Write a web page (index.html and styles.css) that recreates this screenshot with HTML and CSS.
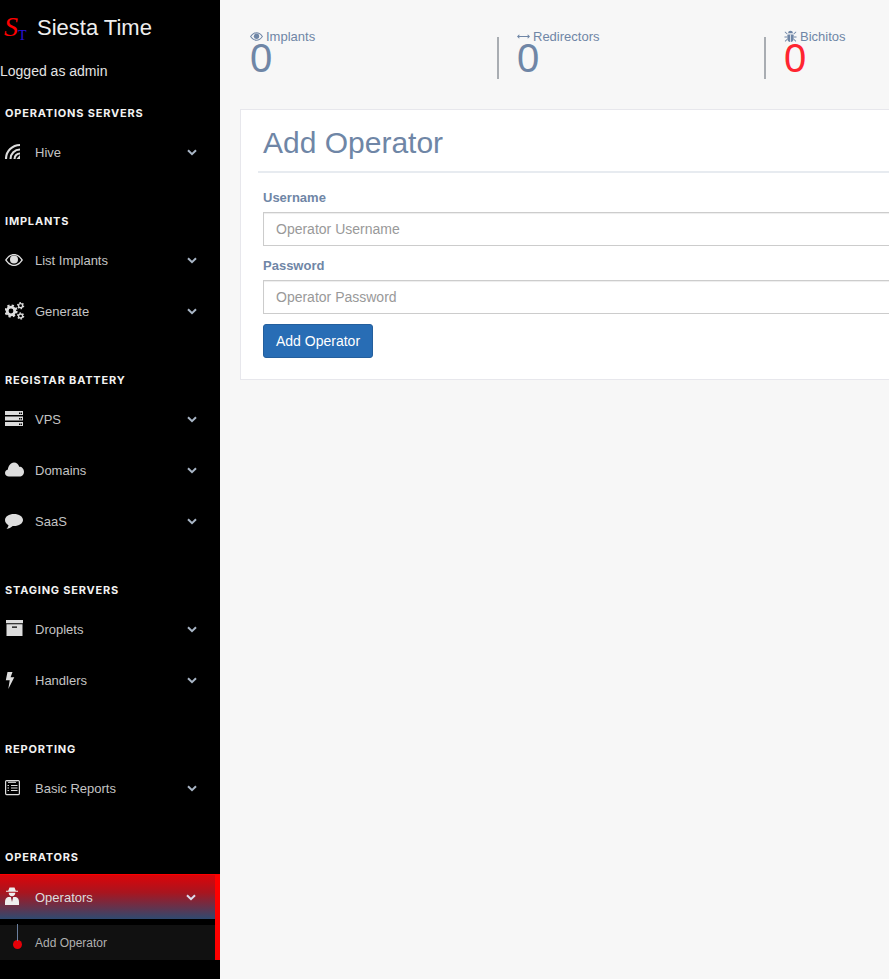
FILE: index.html
```html
<!DOCTYPE html>
<html lang="en">
  <head>
    <meta charset="UTF-8" />
    <meta name="viewport" content="width=device-width, initial-scale=1.0" />
    <title>Siesta Time</title>
    <link rel="stylesheet" href="styles.css">
  </head>
  <body>
    <!-- Sidebar -->
    <aside class="sidebar">
      <div class="brand">
        <span class="logo"><span class="logo-s">S</span><span class="logo-t">T</span></span>
        <span class="brand-name">Siesta Time</span>
      </div>
      <div class="logged">Logged as admin</div>

      <div class="section">Operations Servers</div>
      <a class="nav-row">
        <svg class="icon" viewBox="0 0 20 21"><g fill="none" stroke="#ddd" stroke-width="2.1"><path d="M5.5 18A9.5 9.5 0 0 1 15 8.500"/><path d="M2.500 18A12.500 12.500 0 0 1 15 5.500" opacity="0"/><path d="M9.500 18A5.500 5.500 0 0 1 15 12.500"/><path d="M1 18A14 14 0 0 1 15 4"/></g><path d="M11.500 18 15 14v4z" fill="#ddd"/></svg>
        <span class="nav-text">Hive</span>
        <svg class="chevron" viewBox="0 0 10 7"><path d="M1 1.200l4 4 4-4"/></svg>
      </a>

      <div class="section">Implants</div>
      <a class="nav-row">
        <svg class="icon" viewBox="0 0 20 21"><path fill="#ddd" fill-rule="evenodd" d="M0 11C3 6.500 6 5 9 5s6 1.500 9 6c-3 4.500-6 6-9 6s-6-1.500-9-6zm1.700 0C4 14.300 6.500 15.700 9 15.700s5-1.400 7.300-4.700C14 7.700 11.500 6.300 9 6.300S4 7.700 1.700 11z"/><circle cx="9" cy="10.500" r="4" fill="#ddd"/></svg>
        <span class="nav-text">List Implants</span>
        <svg class="chevron" viewBox="0 0 10 7"><path d="M1 1.200l4 4 4-4"/></svg>
      </a>
      <a class="nav-row">
        <svg class="icon" viewBox="0 0 20 21"><g fill="none" stroke="#ddd"><circle cx="6" cy="11" r="3.800" stroke-width="2.800"/><circle cx="6" cy="11" r="5.400" stroke-width="2.400" stroke-dasharray="2.200 2.040"/><circle cx="15.600" cy="5.700" r="2" stroke-width="1.300"/><circle cx="15.600" cy="5.700" r="3" stroke-width="1.300" stroke-dasharray="1.500 1.640"/><circle cx="15.600" cy="16" r="2" stroke-width="1.300"/><circle cx="15.600" cy="16" r="3" stroke-width="1.300" stroke-dasharray="1.500 1.640"/></g></svg>
        <span class="nav-text">Generate</span>
        <svg class="chevron" viewBox="0 0 10 7"><path d="M1 1.200l4 4 4-4"/></svg>
      </a>

      <div class="section">Registar Battery</div>
      <a class="nav-row">
        <svg class="icon" viewBox="0 0 20 21"><path fill="#ddd" d="M0 3h18v4H0zM0 8.500h18v4H0zM0 14h18v4H0z"/><path fill="#000" d="M14 4.500h1.500V6H14zM16 4.500h1V6h-1zM14 10h1.500v1.500H14zM16 10h1v1.500h-1zM14 15.500h1.500V17H14zM16 15.500h1V17h-1z"/></svg>
        <span class="nav-text">VPS</span>
        <svg class="chevron" viewBox="0 0 10 7"><path d="M1 1.200l4 4 4-4"/></svg>
      </a>
      <a class="nav-row">
        <svg class="icon" viewBox="0 0 20 21"><path fill="#ddd" d="M4 17.500C1.700 17.500 0 16 0 13.900c0-1.900 1.300-3.200 2.900-3.500C3.100 7.600 5.300 3.500 9 3.500c2.700 0 4.500 1.700 5.200 4.200 2.500-.2 4.800 1.900 4.800 5 0 2.700-1.900 4.800-4.500 4.800z"/></svg>
        <span class="nav-text">Domains</span>
        <svg class="chevron" viewBox="0 0 10 7"><path d="M1 1.200l4 4 4-4"/></svg>
      </a>
      <a class="nav-row">
        <svg class="icon" viewBox="0 0 20 21"><path fill="#ddd" d="M9 4c5 0 9 2.600 9 6s-4 6-9 6h-1.300C6 17.700 4 18.500 1.500 19c1-1 1.800-2.200 2-3.700C1.500 14.200 0 12.300 0 10c0-3.400 4-6 9-6z"/></svg>
        <span class="nav-text">SaaS</span>
        <svg class="chevron" viewBox="0 0 10 7"><path d="M1 1.200l4 4 4-4"/></svg>
      </a>

      <div class="section">Staging Servers</div>
      <a class="nav-row">
        <svg class="icon" viewBox="0 0 20 21"><path fill="#ddd" fill-rule="evenodd" d="M1 2h17v3.300H1zM1.500 6.300h16V18h-16zM7 8.500v1.200h5V8.500z"/></svg>
        <span class="nav-text">Droplets</span>
        <svg class="chevron" viewBox="0 0 10 7"><path d="M1 1.200l4 4 4-4"/></svg>
      </a>
      <a class="nav-row">
        <svg class="icon" viewBox="0 0 20 21"><path fill="#ddd" d="M2.500 3h5L5.600 8.300H9.300L3.300 20l1.400-8.700H.8z"/></svg>
        <span class="nav-text">Handlers</span>
        <svg class="chevron" viewBox="0 0 10 7"><path d="M1 1.200l4 4 4-4"/></svg>
      </a>

      <div class="section">Reporting</div>
      <a class="nav-row">
        <svg class="icon" viewBox="0 0 20 21"><rect x=".6" y="3.600" width="13.800" height="14" rx="1" fill="none" stroke="#ddd" stroke-width="1.200"/><path fill="none" stroke="#ddd" d="M3 4.500l1 1.500 1-1.500 1 1.500 1-1.500 1 1.500 1-1.500 1 1.500 1-1.500M2.500 8.500h1.500M6 8.500h6.500M2.500 11h1.500M6 11h6.500M2.500 13.500h1.500M6 13.500h6.500"/></svg>
        <span class="nav-text">Basic Reports</span>
        <svg class="chevron" viewBox="0 0 10 7"><path d="M1 1.200l4 4 4-4"/></svg>
      </a>

      <div class="section">Operators</div>
      <div class="nav-group">
        <a class="nav-row nav-row-active">
          <svg class="icon" viewBox="0 0 20 21"><path fill="#eee" d="M4.500 1.500h5l1.300 3.300H13v1H1v-1h2.200zM3.700 6.800h6.600c0 2-1.300 3.500-3.300 3.500S3.700 8.800 3.700 6.800z"/><path fill="#eee" d="M3 11h2.800L7 16l1.200-5H11c2 .5 3 2.500 3 5v3H0v-3c0-2.500 1-4.500 3-5z"/></svg>
          <span class="nav-text">Operators</span>
          <svg class="chevron" viewBox="0 0 10 7"><path d="M1 1.200l4 4 4-4"/></svg>
        </a>
        <a class="sub-row">
          <span class="sub-dot"></span>
          <span class="sub-text">Add Operator</span>
        </a>
      </div>
    </aside>

    <!-- Main content -->
    <main class="content">
      <div class="stats">
        <div class="stat">
          <div class="stat-label">
            <svg class="stat-icon" viewBox="0 0 14 14"><path fill-rule="evenodd" d="M0 7c2-3 4.500-4.500 7-4.500S12 4 14 7c-2 3-4.500 4.500-7 4.500S2 10 0 7zm1.300 0C3 9.300 5 10.500 7 10.500S11 9.300 12.700 7C11 4.700 9 3.500 7 3.500S3 4.700 1.300 7z"/><circle cx="7" cy="6.800" r="2.900"/></svg>
            Implants
          </div>
          <div class="stat-value">0</div>
        </div>
        <div class="stat stat-split">
          <div class="stat-label">
            <svg class="stat-icon" viewBox="0 0 14 14"><path d="M0 7l2.500-2.500V6.400h9V4.500L14 7l-2.500 2.500V7.600h-9v1.900z"/></svg>
            Redirectors
          </div>
          <div class="stat-value">0</div>
        </div>
        <div class="stat stat-split">
          <div class="stat-label">
            <svg class="stat-icon" viewBox="0 0 14 14"><path d="M4.500 3.200C4.500 1.700 5.600.8 7 .8s2.500.9 2.500 2.400zM3.800 4h6.400v.5H3.800zM3.600 5.200h3v7.800c-1.800-.2-3-1.600-3-3.500zM7.400 5.200h3v4.300c0 1.900-1.200 3.300-3 3.500zM.8 1.800h.9l2 2.200-.6.600-2.300-2.300zM12.300 1.800h.9v.5L10.900 4.600l-.6-.6zM.5 7.100h2.700v.9H.5zM10.800 7.100h2.700v.9h-2.700zM3.100 9.700l.5.700-2.200 2.200-.6-.7zM10.900 9.700l2.300 2.200-.6.700-2.200-2.200z"/></svg>
            Bichitos
          </div>
          <div class="stat-value stat-value-alert">0</div>
        </div>
      </div>

      <div class="card">
        <h1 class="card-title">Add Operator</h1>
        <form>
          <label for="username">Username</label>
          <input type="text" id="username" name="username" placeholder="Operator Username" />
          <label for="password">Password</label>
          <input type="password" id="password" name="password" placeholder="Operator Password" />
          <button type="submit">Add Operator</button>
        </form>
      </div>
    </main>
  </body>
</html>
```

FILE: styles.css
```css
html,
body {
  height: 100%;
  overflow: hidden;
}
body {
  margin: 0;
  display: flex;
  font-family: "Liberation Sans", Arial, sans-serif;
  background: #f7f7f7;
}

/* Sidebar */
.sidebar {
  flex: none;
  width: 220px;
  height: 979px;
  background: #000;
  color: #ddd;
}
.brand {
  display: flex;
  align-items: center;
  height: 55px;
}
.logo {
  width: 37px;
  font-family: "Liberation Serif", serif;
  line-height: 1;
}
.logo-s {
  margin-left: 4px;
  font-size: 28px;
  font-style: italic;
  color: #f00;
}
.logo-t {
  font-size: 14px;
  color: #2a12d8;
  vertical-align: -4px;
}
.brand-name {
  font-size: 22px;
  color: #eee;
}
.logged {
  margin-top: 7px;
  height: 18px;
  font-size: 14px;
  line-height: 18px;
  color: #e4e4e4;
}
.section {
  height: 27px;
  margin-top: 30px;
  padding-left: 5px;
  font-family: Inter, "Liberation Sans", sans-serif;
  font-size: 11px;
  font-weight: 700;
  line-height: 27px;
  letter-spacing: 0.8px;
  text-transform: uppercase;
  color: #f2f2f2;
}
.logged + .section {
  margin-top: 20px;
}
.nav-row {
  display: flex;
  align-items: center;
  height: 51px;
  padding-left: 5px;
  font-size: 13px;
}
.icon {
  flex: none;
  width: 20px;
  height: 21px;
  margin-right: 10px;
  margin-bottom: 2px;
}
.nav-text {
  flex: 1;
  color: #c4c4c4;
}
.chevron {
  flex: none;
  width: 10px;
  height: 7px;
  margin-right: 23px;
  fill: none;
  stroke: #a9b6c6;
  stroke-width: 2;
}

/* Open group */
.nav-group {
  margin-top: 3px;
  border-right: 5px solid #f00;
}
.nav-row-active {
  height: 44px;
  border-top: 1px solid #f00;
  background: linear-gradient(#dc0409, #a8151f 40%, #2f4a70);
}
.nav-row-active .nav-text {
  color: #ddd;
}
.nav-row-active .chevron {
  margin-right: 19px;
  stroke: #dde;
}
.sub-row {
  display: flex;
  align-items: center;
  height: 35px;
  margin-top: 6px;
  background: #111;
}
.sub-dot {
  flex: none;
  position: relative;
  width: 9px;
  height: 9px;
  margin: 0 13px 0 13px;
  top: 2px;
  border-radius: 50%;
  background: #e60008;
}
.sub-dot::before {
  content: "";
  position: absolute;
  left: 4px;
  bottom: 8px;
  width: 1px;
  height: 17px;
  background: #6b7f9e;
}
.sub-text {
  font-size: 12px;
  color: #b0b0b0;
}

/* Main content */
.content {
  flex: none;
  width: 900px;
  padding: 37px 0 0 10px;
}
.stats {
  display: grid;
  grid-template-columns: repeat(3, 267px);
  margin-bottom: 30px;
}
.stat {
  height: 42px;
  padding-left: 20px;
}
.stat-split {
  padding-left: 18px;
  border-left: 2px solid #a9adb2;
}
.stat-label {
  display: flex;
  align-items: center;
  height: 14px;
  margin-top: -8px;
  font-size: 13px;
  color: #6f86a6;
}
.stat-icon {
  flex: none;
  width: 13px;
  height: 13px;
  margin-right: 3px;
  fill: #6f86a6;
}
.stat-value {
  font-size: 40px;
  line-height: 30px;
  color: #6f86a6;
}
.stat-value-alert {
  color: #ff2530;
}

/* Card */
.card {
  width: 800px;
  margin-left: 10px;
  padding: 16px 22px 21px;
  background: #fff;
  border: 1px solid #e7e7ec;
}
.card-title {
  margin: 0 0 17px -5px;
  padding: 0 0 12px 5px;
  font-size: 30px;
  font-weight: 400;
  line-height: 33px;
  color: #6f86a6;
  border-bottom: 2px solid #e7ebf0;
}
label {
  display: block;
  margin-bottom: 7px;
  font-size: 13px;
  font-weight: 700;
  line-height: 15px;
  color: #6f86a6;
}
input {
  display: block;
  box-sizing: border-box;
  width: 100%;
  height: 34px;
  margin-bottom: 12px;
  padding: 6px 12px;
  font-family: inherit;
  font-size: 14px;
  background: #fff;
  border: 1px solid #ccc;
  box-shadow: inset 0 1px 1px rgba(0, 0, 0, 0.075);
}
input::placeholder {
  color: #999;
}
button {
  display: block;
  height: 34px;
  margin-top: -2px;
  padding: 0 12px;
  font-family: inherit;
  font-size: 14px;
  color: #fff;
  background: #286db5;
  border: 1px solid #245f9d;
  border-radius: 3px;
  cursor: pointer;
}
```
